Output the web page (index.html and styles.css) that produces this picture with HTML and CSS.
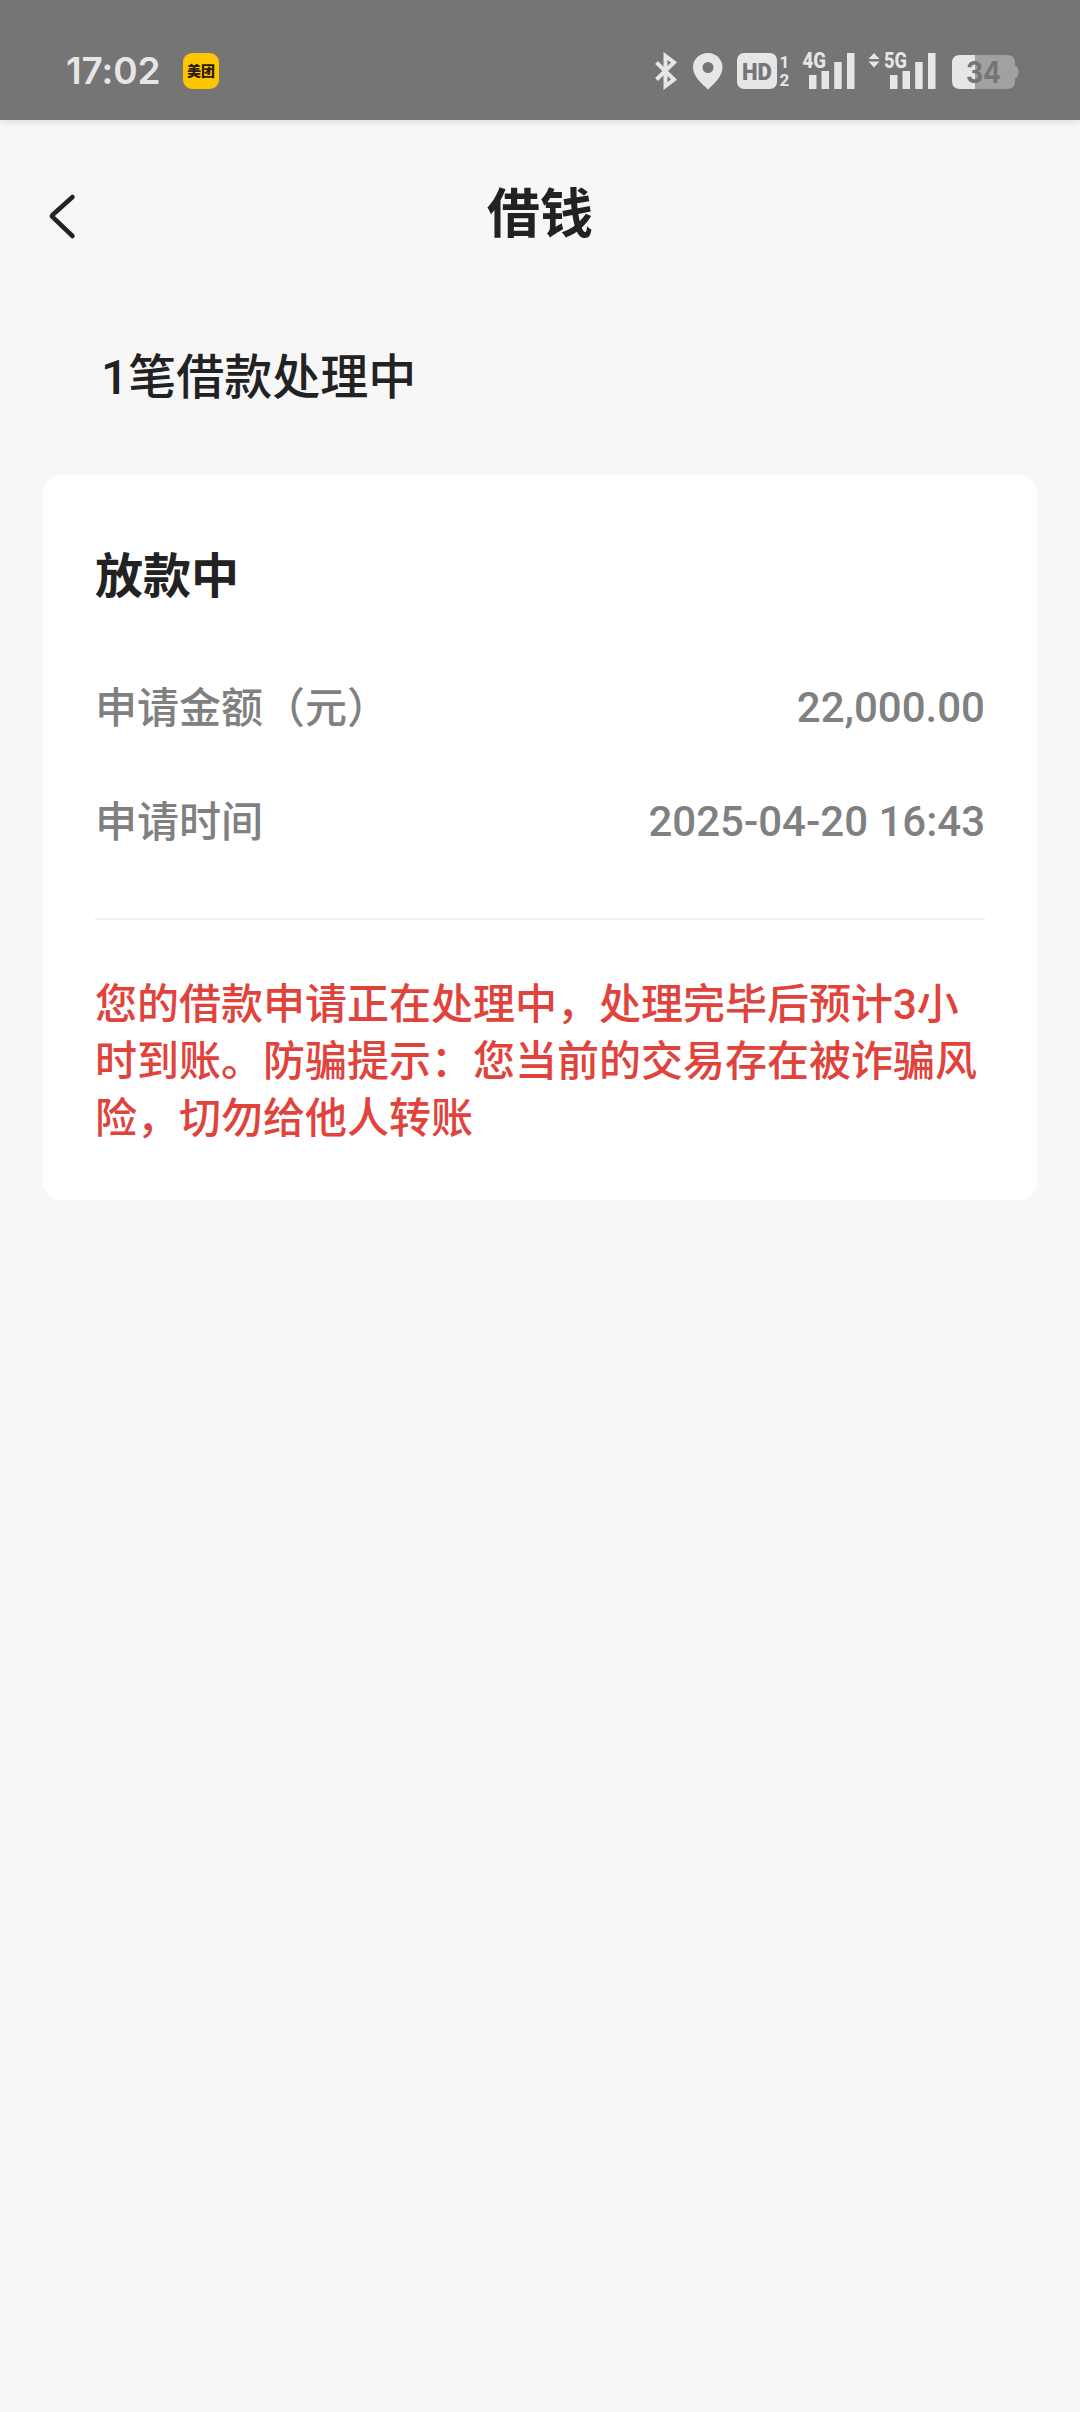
FILE: index.html
```html
<!DOCTYPE html>
<html lang="zh-CN">
<head>
<meta charset="utf-8">
<title>借钱</title>
<link rel="stylesheet" href="styles.css">
</head>
<body>
<header class="status">
  <span class="clock">17:02</span>
  <span class="app-badge">美团</span>
  <div class="status-icons">
    <svg class="ic-bt" width="24" height="40" viewBox="654 50 24 40"><path d="M656.500 61.500L674 78.500L665.500 85V55L674 61.500L656.500 78.500"/></svg>
    <svg class="ic-pin" width="30" height="40" viewBox="693 50 30 40"><path fill-rule="evenodd" d="M708 52C699 52 693 58.500 693 66.500C693 75 701 82 708 88.500C715 82 722.500 75 722.500 66.500C722.500 58.500 716.500 52 708 52ZM708 61A5.500 5.500 0 1 1 708 72A5.500 5.500 0 1 1 708 61Z"/></svg>
    <svg class="ic-hd" width="54" height="40" viewBox="737 50 54 40"><rect x="737" y="52" width="40" height="36" rx="7"/><text class="hd" x="742" y="78.500" textLength="30" lengthAdjust="spacingAndGlyphs">HD</text><text class="sim" x="779.500" y="67">1</text><text class="sim" x="779.500" y="85">2</text></svg>
    <svg class="ic-4g" width="53" height="46" viewBox="802 44 53 46"><text class="net" x="802.500" y="67" textLength="23.500" lengthAdjust="spacingAndGlyphs">4G</text><path d="M809 74h7.500v14h-7.500zM821.500 70h7.500v18h-7.500zM834.200 61h7.500v27h-7.500zM847 52h7.500v36h-7.500z"/></svg>
    <svg class="ic-5g" width="68" height="46" viewBox="868 44 68 46"><path d="M868.500 58l5.500-6 5.500 6zM868.500 60.500l5.500 6 5.500-6z"/><text class="net" x="884" y="67" textLength="23" lengthAdjust="spacingAndGlyphs">5G</text><path d="M890 74h7.500v14h-7.500zM902.500 70h7.500v18h-7.500zM915.200 61h7.500v27h-7.500zM928 52h7.500v36h-7.500z"/></svg>
    <svg class="ic-bat" width="67" height="40" viewBox="952 50 67 40"><path class="rest" d="M975 54H1007Q1015 54 1015 62V64.500Q1018.500 66 1018.500 71Q1018.500 76 1015 77.500V80Q1015 88 1007 88H975Z"/><path d="M975 54H960Q952 54 952 62V80Q952 88 960 88H975Z"/><text class="pct" x="966" y="82" textLength="35" lengthAdjust="spacingAndGlyphs">34</text></svg>
  </div>
</header>
<nav class="nav">
  <svg class="back" width="30" height="50" viewBox="46 191 30 50"><path d="M72.500 197L52.500 215Q51.500 216 52.500 217L72.500 236"/></svg>
  <h1 class="title">借钱</h1>
</nav>
<main>
  <h2 class="summary">1笔借款处理中</h2>
  <section class="card">
    <h3 class="state">放款中</h3>
    <div class="row"><span class="label">申请金额（元）</span><span class="value">22,000.00</span></div>
    <div class="row"><span class="label">申请时间</span><span class="value">2025-04-20 16:43</span></div>
    <p class="notice">您的借款申请正在处理中，处理完毕后预计3小时到账。防骗提示：您当前的交易存在被诈骗风险，切勿给他人转账</p>
  </section>
</main>
</body>
</html>
```
FILE: styles.css
```css
* { box-sizing: border-box; }
body {
  margin: 0;
  width: 1080px;
  min-height: 2412px;
  background: #f7f7f7;
  color: #222;
  font-family: Roboto, "Noto Sans CJK SC", sans-serif;
}
h1, h2, h3, p { margin: 0; }

.status {
  display: flex;
  align-items: center;
  height: 120px;
  padding: 22px 61px 0 66px;
  background: #757575;
  color: #e6e6e6;
  box-shadow: 0 1px 8px rgba(0, 0, 0, .12);
}
.clock {
  width: 117px;
  font: 600 37px/40px Inter, sans-serif;
  letter-spacing: -0.1px;
}
.app-badge {
  width: 36px;
  height: 36px;
  border-radius: 9px;
  background: #fdc500;
  color: #2a1c00;
  font: 900 14px/35px "Noto Sans CJK SC", sans-serif;
  text-align: center;
}
.status-icons {
  display: flex;
  align-items: flex-end;
  height: 40px;
  margin-left: auto;
  fill: #e6e6e6;
}
.status-icons svg { display: block; flex: none; overflow: visible; }
.ic-bt { margin-right: 15px; }
.ic-bt path { fill: none; stroke: #e6e6e6; stroke-width: 4; }
.ic-pin { margin-right: 14px; }
.ic-hd { margin-right: 11px; }
.ic-4g { margin-right: 13px; }
.ic-5g { margin-right: 16px; }
.hd { font: 900 24px Roboto, sans-serif; fill: #757575; }
.sim { font: 700 17px Roboto, sans-serif; }
.net { font: 800 21.5px Roboto, sans-serif; }
.rest { fill: #a1a1a1; }
.pct { font: 700 29.5px Inter, sans-serif; fill: #757575; }

.nav {
  display: grid;
  grid-template-columns: 80px 1fr 80px;
  align-items: center;
  height: 192px;
  padding: 0 46px;
}
.back { fill: none; stroke: #222; stroke-width: 4.5; stroke-linecap: round; }
.title {
  padding-bottom: 3px;
  font-size: 53px;
  line-height: 72px;
  font-weight: 700;
  text-align: center;
}

.summary {
  height: 163px;
  padding: 30px 0 0 101px;
  font-size: 48px;
  line-height: 72px;
  font-weight: 500;
}
.card {
  height: 725px;
  margin: 0 43px;
  padding: 66px 53px 0 52px;
  border-radius: 18px;
  background: #fff;
}
.state { margin-bottom: 36px; font-size: 48px; line-height: 72px; font-weight: 700; }
.row {
  display: flex;
  justify-content: space-between;
  align-items: center;
  height: 114px;
  margin-right: -1px;
  color: #808080;
  font-size: 42px;
  font-weight: 500;
}
.label { padding-bottom: 4px; }
.value { padding-top: 2px; }
.notice {
  margin-top: 41px;
  margin-right: -1px;
  padding-top: 56px;
  border-top: 2px solid #f0f0f0;
  color: #e0433c;
  font-size: 42px;
  line-height: 57px;
  font-weight: 500;
}
```
